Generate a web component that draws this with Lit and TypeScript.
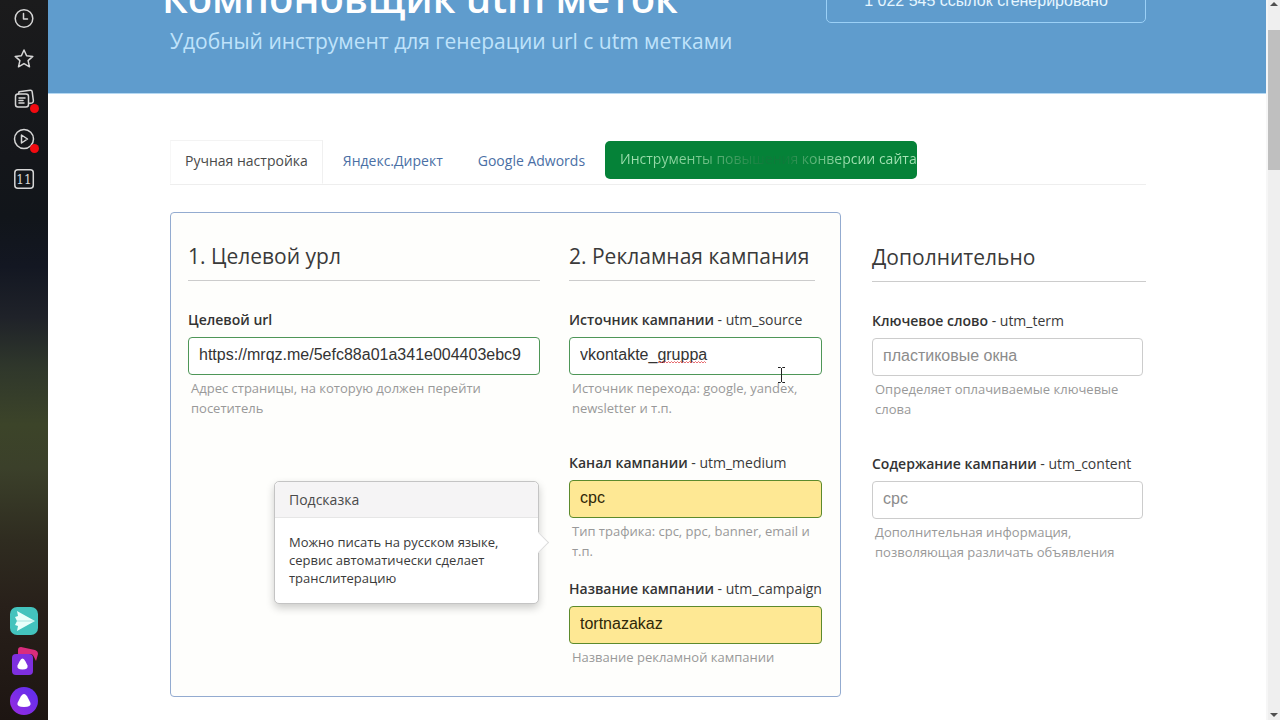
import { LitElement, html, css, svg, nothing } from "lit";
import { customElement, property } from "lit/decorators.js";

@customElement("side-rail")
class SideRail extends LitElement {
  static styles = css`
    :host {
      display: flex;
      flex-direction: column;
      justify-content: space-between;
      align-items: center;
      width: 48px;
      flex: none;
      box-sizing: border-box;
      padding: 7px 0 4px;
      background: linear-gradient(#1b1b1c 0, #14161a 22%, #11151a 30%, #131722 37%, #1f2229 44%, #2f372b 51%, #3c4429 59%, #3b402a 65%, #2f2c20 75%, #28201a 84%, #1d1512 100%);
    }
    .group { display: flex; flex-direction: column; align-items: center; gap: 16px; }
    .apps { gap: 10px; }
    button {
      display: block;
      position: relative;
      border: 0;
      padding: 0;
      background: none;
      width: 24px;
      height: 24px;
      color: #d6d6d6;
    }
    .apps button { width: 30px; height: 30px; }
    svg { display: block; width: 100%; height: 100%; overflow: visible; }
    .dot {
      position: absolute;
      right: -3px;
      bottom: -2px;
      width: 9px;
      height: 9px;
      border-radius: 50%;
      background: #f20a10;
    }
    .line { fill: none; stroke: currentColor; stroke-width: 1.5; stroke-linejoin: round; stroke-linecap: round; }
    .num { font: 12px "DejaVu Serif", serif; fill: currentColor; text-anchor: middle; }
  `;

  render() {
    const icon = (label: string, body: unknown, dot = false) => html`
      <button type="button" aria-label=${label}>
        <svg viewBox="0 0 24 24">${body}</svg>
        ${dot ? html`<span class="dot"></span>` : nothing}
      </button>`;
    return html`
      <div class="group">
        ${icon("История", svg`<g class="line"><circle cx="12" cy="11.500" r="8.800"/><path d="M11.500 6.500V12h4"/></g>`)}
        ${icon("Закладки", svg`<path class="line" d="M12 3l2.600 5.800 6.200.6-4.700 4.200 1.400 6.200-5.500-3.200-5.500 3.200 1.400-6.200-4.700-4.200 6.200-.6z"/>`)}
        ${icon("Коллекции", svg`<g class="line"><rect x="3.500" y="7" width="13" height="13" rx="2.500"/><path d="M6.500 7l.5-2.200 11.200-1.500q1.800-.2 2 1.600l1.200 9q.1 1.600-1.500 2l-2.500.3M7 11h6M7 13.500h4M7 16h5"/></g>`, true)}
        ${icon("Видео", svg`<g class="line"><circle cx="12" cy="12" r="9.500"/><path d="M9.500 8l6 4-6 4z"/></g>`, true)}
        ${icon("Вкладки", svg`<rect class="line" x="2.800" y="2.800" width="18.500" height="18.500" rx="3"/><text class="num" x="12" y="16.500">11</text>`)}
      </div>
      <div class="group apps">
        <button type="button" aria-label="Почта">
          <svg viewBox="0 0 30 30">
            <rect x="1" y="1" width="28" height="28" rx="7" fill="#43c3bd"/>
            <path d="M8 5L26 15 8 25l1-5-3-1 2-4-2-4 3-1z" fill="#e9fffb"/>
            <path d="M8 15h17" stroke="#a9e5df"/>
          </svg>
        </button>
        <button type="button" aria-label="Алиса, окна">
          <svg viewBox="0 0 30 30">
            <path d="M9 4q0-3 3-3l14 3q3 1 3 4l-2 7-2-4q-1-3-4-3H9z" fill="#d92c7d"/>
            <rect x="3" y="8" width="21" height="21" rx="4" fill="#7e2fdf"/>
            <path d="M13.500 12.500q1.500 0 3 3l2 4q1 4-5 4t-5-4l2-4q1.500-3 3-3z" fill="#fff"/>
          </svg>
        </button>
        <button type="button" aria-label="Алиса">
          <svg viewBox="0 0 30 30">
            <defs><linearGradient id="al" x1="0" y1="1" x2="1" y2="0"><stop offset="0" stop-color="#9a2be0"/><stop offset="1" stop-color="#5a2fee"/></linearGradient></defs>
            <circle cx="15" cy="15" r="14" fill="url(#al)"/>
            <path d="M15 8q2 0 4 4l2.500 5q1 4-6.500 4t-6.500-4l2.500-5q2-4 4-4z" fill="#fff"/>
          </svg>
        </button>
      </div>`;
  }
}

@customElement("utm-field")
class UtmField extends LitElement {
  @property() name = "";
  @property() heading = "";
  @property() param = "";
  @property() value = "";
  @property() placeholder = "";
  @property() help = "";
  @property() tone = "";
  @property({ type: Boolean }) misspelt = false;

  static styles = css`
    :host { display: block; position: relative; }
    label { display: block; font-size: 14px; line-height: 20px; color: #3a3a3a; white-space: nowrap; }
    b { font-weight: 600; color: #333; }
    .box { position: relative; margin-top: 7px; }
    input {
      display: block;
      box-sizing: border-box;
      width: 100%;
      height: 38px;
      padding: 0 10px 2px;
      border: 1px solid #ccc;
      border-radius: 4px;
      background: #fff;
      color: #333;
      font: 16px "Liberation Sans", Arial, sans-serif;
      outline: 0;
    }
    input::placeholder { color: #8c8c8c; opacity: 1; }
    .valid { border-color: #4e9657; }
    .filled { border-color: #5c8a2c; background: #fee894; color: #2e2708; }
    p { margin: 3px 0 0; padding: 0 3px; font-size: 13px; line-height: 20px; color: #999; }
    .wave { position: absolute; left: 89px; top: 24px; width: 50px; height: 3px; }
  `;

  render() {
    return html`
      <label for="box"><b>${this.heading}</b>${this.param ? ` - ${this.param}` : ""}</label>
      <div class="box">
        <input id="box" type="text" name=${this.name} class=${this.tone} autocomplete="off" spellcheck="false"
          .value=${this.value} placeholder=${this.placeholder}>
        ${this.misspelt ? html`<svg class="wave" viewBox="0 0 50 3">
          <path d="M0 2${"l1.500-1.500 1.500 1.500".repeat(16)}" fill="none" stroke="#e2484d" stroke-width=".8"/></svg>` : nothing}
      </div>
      <p>${this.help}</p>`;
  }
}

@customElement("app-root")
class AppRoot extends LitElement {
  static styles = css`
    :host {
      display: flex;
      height: 100vh;
      overflow: hidden;
      background: #fff;
      color: #3a3a3a;
      font-family: "Open Sans", sans-serif;
    }
    .page { flex: 1; min-width: 0; }
    .wrap { box-sizing: border-box; max-width: 978px; margin: 0 auto; padding-left: 2px; }
    .hero {
      display: flex;
      flex-direction: column;
      justify-content: flex-end;
      height: 94px;
      overflow: hidden;
      background: #5f9ccd;
      border-bottom: 1px solid #b5d8f2;
      box-sizing: border-box;
    }
    .hero .wrap { display: flex; justify-content: space-between; align-items: flex-start; width: 100%; }
    h1 { margin: 0 0 0 -8px; font-size: 40px; line-height: 48px; font-weight: 600; color: #fff; white-space: nowrap; }
    .lead { margin: 4px 0 37px; font-size: 21px; line-height: 30px; color: #bfe3fb; white-space: nowrap; }
    .count {
      box-sizing: border-box;
      width: 320px;
      height: 49px;
      border: 1px solid #9bd0f6;
      border-radius: 5px;
      color: #e6f6ff;
      font: 16px/52px "Liberation Sans", Arial, sans-serif;
      text-align: center;
    }
    nav {
      display: flex;
      align-items: flex-start;
      gap: 5px;
      margin-top: 46px;
      border-bottom: 1px solid #eee;
    }
    nav a {
      padding: 10px 14px 12px;
      border: 1px solid transparent;
      font-size: 14px;
      line-height: 20px;
      color: #4a6fa5;
      text-decoration: none;
      white-space: nowrap;
    }
    nav .current { margin-bottom: -1px; border-color: #f3f3f3 #f0f0f0 #fff #f7f7f7; background: #fff; color: #4a4a4a; }
    nav .promo {
      box-sizing: border-box;
      width: 312px;
      margin-top: 1px;
      padding: 7px 0 9px 14px;
      overflow: hidden;
      border-radius: 5px;
      background: #058238;
    }
    .shine {
      background: linear-gradient(90deg, #a6e3b5 0, #86d09a 70px, #3f9c5f 115px, #0f7a3a 145px, #0f7a3a 165px, #63b87d 195px, #a6e3b5 230px);
      -webkit-background-clip: text;
      background-clip: text;
      color: transparent;
    }
    .columns {
      display: grid;
      grid-template-columns: minmax(0, 671fr) minmax(0, 274fr);
      gap: 31px;
      margin-top: 27px;
      align-items: start;
    }
    .panel {
      box-sizing: border-box;
      display: grid;
      grid-template-columns: minmax(0, 352fr) minmax(0, 253fr);
      gap: 29px;
      padding: 29px 18px 29px 17px;
      border: 1px solid #93abd0;
      border-radius: 4px;
      background: #fefefc;
    }
    .extra { padding-top: 31px; }
    h2 {
      margin: 0 0 29px;
      padding-bottom: 10px;
      border-bottom: 1px solid #ccc;
      font-size: 21px;
      line-height: 28px;
      font-weight: 400;
      color: #3a3a3a;
      white-space: nowrap;
    }
    .campaign h2 { margin-right: 7px; }
    .extra utm-field { margin-right: 3px; }
    .spaced { margin-bottom: 35px; }
    .close { margin-bottom: 18px; }
    .anchor { position: relative; }
    .hint {
      position: absolute;
      right: calc(100% + 30px);
      top: 28px;
      box-sizing: border-box;
      width: 265px;
      border: 1px solid #c4c4c4;
      border-radius: 5px;
      background: #fff;
      box-shadow: 0 4px 8px #0003;
    }
    .hint h3 {
      margin: 0;
      padding: 8px 14px;
      border-bottom: 1px solid #e6e6e6;
      border-radius: 5px 5px 0 0;
      background: #f5f4f5;
      font-size: 14px;
      line-height: 19px;
      font-weight: 400;
      color: #4a4a4a;
    }
    .hint p { margin: 0; padding: 15px 14px 16px; font-size: 13px; line-height: 18px; }
    .hint::after {
      content: "";
      position: absolute;
      right: -8px;
      top: 53px;
      width: 14px;
      height: 14px;
      border: solid #dcdcdc;
      border-width: 1px 1px 0 0;
      background: #fff;
      transform: rotate(45deg);
    }
    .caret { position: absolute; right: 36px; top: 57px; width: 9px; height: 16px; }
    .scroll {
      flex: none;
      display: flex;
      flex-direction: column;
      align-items: center;
      width: 12px;
      border-left: 2px solid #f6f6f6;
      background: #efefef;
    }
    .scroll svg { width: 10px; height: 6px; }
    .scroll .up { margin: 1px 0 23px; }
    .scroll .down { margin: auto 0 2px; }
    .thumb { width: 100%; height: 140px; background: #bfbfbf; }
  `;

  render() {
    return html`
      <side-rail></side-rail>
      <div class="page">
        <header class="hero">
          <div class="wrap">
            <div>
              <h1>Компоновщик utm меток</h1>
              <p class="lead">Удобный инструмент для генерации url с utm метками</p>
            </div>
            <div class="count">1 022 545 ссылок сгенерировано</div>
          </div>
        </header>
        <main class="wrap">
          <nav>
            <a class="current" href="#manual">Ручная настройка</a>
            <a href="#direct">Яндекс.Директ</a>
            <a href="#adwords">Google Adwords</a>
            <a class="promo" href="#tools"><span class="shine">Инструменты повышения конверсии сайта</span></a>
          </nav>
          <form class="columns">
            <div class="panel">
              <section>
                <h2>1. Целевой урл</h2>
                <utm-field name="url" heading="Целевой url" tone="valid"
                  value="https://mrqz.me/5efc88a01a341e004403ebc9"
                  help="Адрес страницы, на которую должен перейти посетитель"></utm-field>
              </section>
              <section class="campaign">
                <h2>2. Рекламная кампания</h2>
                <div class="anchor spaced">
                  <utm-field name="source" heading="Источник кампании" param="utm_source" tone="valid" misspelt
                    value="vkontakte_gruppa" help="Источник перехода: google, yandex, newsletter и т.п."></utm-field>
                  <svg class="caret" viewBox="0 0 9 16" aria-hidden="true">
                    <path d="M1 .5h2.500l1 1 1-1H8M4.500 1v14M1 15.500h2.500l1-1 1 1H8" fill="none" stroke="#222"/>
                  </svg>
                </div>
                <div class="anchor close">
                  <utm-field name="medium" heading="Канал кампании" param="utm_medium" tone="filled"
                    value="cpc" help="Тип трафика: cpc, ppc, banner, email и т.п."></utm-field>
                  <div class="hint" role="tooltip">
                    <h3>Подсказка</h3>
                    <p>Можно писать на русском языке, сервис автоматически сделает транслитерацию</p>
                  </div>
                </div>
                <utm-field name="campaign" heading="Название кампании" param="utm_campaign" tone="filled"
                  value="tortnazakaz" help="Название рекламной кампании"></utm-field>
              </section>
            </div>
            <section class="extra">
              <h2>Дополнительно</h2>
              <utm-field class="spaced" name="term" heading="Ключевое слово" param="utm_term"
                placeholder="пластиковые окна" help="Определяет оплачиваемые ключевые слова"></utm-field>
              <utm-field name="content" heading="Содержание кампании" param="utm_content"
                placeholder="cpc" help="Дополнительная информация, позволяющая различать объявления"></utm-field>
            </section>
          </form>
        </main>
      </div>
      <div class="scroll" aria-hidden="true">
        <svg class="up" viewBox="0 0 10 6"><path d="M1 5l4-4 4 4z" fill="#505050"/></svg>
        <div class="thumb"></div>
        <svg class="down" viewBox="0 0 10 6"><path d="M1 1l4 4 4-4z" fill="#505050"/></svg>
      </div>`;
  }
}
